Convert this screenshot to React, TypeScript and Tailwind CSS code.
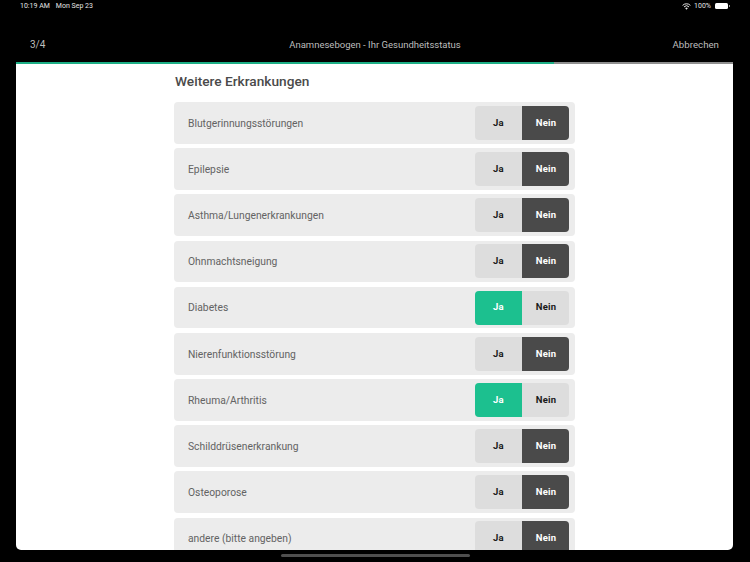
import React from "react";

const rows: [string, boolean][] = [
  ["Blutgerinnungsstörungen", false],
  ["Epilepsie", false],
  ["Asthma/Lungenerkrankungen", false],
  ["Ohnmachtsneigung", false],
  ["Diabetes", true],
  ["Nierenfunktionsstörung", false],
  ["Rheuma/Arthritis", true],
  ["Schilddrüsenerkrankung", false],
  ["Osteoporose", false],
  ["andere (bitte angeben)", false],
];

function Row({ label, yes }: { label: string; yes: boolean }) {
  return (
    <div className="flex h-[41.6px] shrink-0 items-center justify-between rounded-[4px] bg-[#ececec] pl-[14px] pr-[6px]">
      <span className="pt-[1px] text-[10.3px] text-[#636363]">{label}</span>
      <div className="flex h-[34px] w-[94px] overflow-hidden rounded-[4px] bg-[#dddddd] text-[9.5px] font-bold tracking-[0.2px]">
        <div className={`flex w-[47px] items-center justify-center ${yes ? "bg-[#1cc08f] text-white" : "text-[#1a1a1a]"}`}>Ja</div>
        <div className={`flex flex-1 items-center justify-center pl-px ${yes ? "text-[#1a1a1a]" : "bg-[#4a4a4a] text-white"}`}>Nein</div>
      </div>
    </div>
  );
}

export default function App() {
  return (
    <div className="flex h-[562px] w-[750px] flex-col overflow-hidden bg-black font-['Roboto','Noto_Sans',sans-serif]">
      <div className="flex h-[11px] shrink-0 items-center justify-between pl-[20px] pr-[20px] pt-[1px] text-[7px] text-[#e5e5e5]">
        <div className="flex gap-[6px] whitespace-pre"><span>10:19 AM</span><span>Mon Sep 23</span></div>
        <div className="flex items-center gap-[3px]">
          <svg width="9" height="7" viewBox="0 0 9 7" fill="none" stroke="#e5e5e5">
            <path d="M.6 2.4a5.5 5.5 0 0 1 7.8 0" strokeWidth="1" />
            <path d="M2 3.9a3.5 3.5 0 0 1 5 0" strokeWidth="1" />
            <path d="M4.5 6.8 3.2 5.3a1.8 1.8 0 0 1 2.6 0Z" fill="#e5e5e5" stroke="none" />
          </svg>
          <span>100%</span>
          <div className="ml-px flex items-center">
            <div className="h-[6px] w-[13px] rounded-[1.5px] bg-white" />
            <div className="ml-px h-[2px] w-px bg-[#999]" />
          </div>
        </div>
      </div>
      <div className="flex h-[51px] shrink-0 items-center justify-between pl-[30px] pr-[31px] pt-[18px] text-[9.5px] text-[#bdbdbd]">
        <span className="-mt-[2px] w-[60px] text-[10px]">3/4</span>
        <span className="pl-[1px]">Anamnesebogen - Ihr Gesundheitsstatus</span>
        <span className="w-[60px] text-right text-[9.7px]">Abbrechen</span>
      </div>
      <div className="ml-[16px] flex h-[488px] w-[717px] shrink-0 flex-col overflow-hidden rounded-b-[5px] bg-white">
        <div className="flex h-[2px] shrink-0 bg-[#8f8f8f]">
          <div className="w-[538px] bg-[#1cae85]" />
        </div>
        <div className="ml-[158px] flex w-[401px] flex-col gap-[4.6px] pt-[7px]">
          <h1 className="mb-[6.4px] pl-px text-[13.7px] font-medium leading-[20px] text-[#4a4a4a]">Weitere Erkrankungen</h1>
          {rows.map(([label, yes]) => (
            <Row key={label} label={label} yes={yes} />
          ))}
        </div>
      </div>
      <div className="flex flex-1 items-start justify-center pt-[4px]">
        <div className="h-[3px] w-[189px] rounded-full bg-[#4f4f4f]" />
      </div>
    </div>
  );
}
